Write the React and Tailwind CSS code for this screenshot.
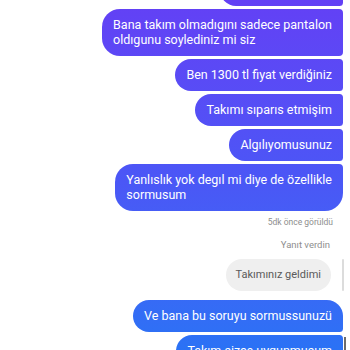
const font = { fontFamily: "Roboto, 'Liberation Sans', sans-serif" };

const sent = [
  { lines: ["Tamam ama bana"], pos: "first" },
  { lines: ["Bana takım olmadıgını sadece pantalon", "oldıgunu soylediniz mi siz"], pos: "mid" },
  { lines: ["Ben 1300 tl fiyat verdiğiniz"], pos: "mid" },
  { lines: ["Takımı sıparıs etmişim"], pos: "mid" },
  { lines: ["Algılıyomusunuz"], pos: "mid" },
  { lines: ["Yanlıslık yok degıl mi diye de özellikle", "sormusum"], pos: "last" },
];

const corner = {
  first: "rounded-l-[18px] rounded-tr-[18px] rounded-br-[4px]",
  mid: "rounded-l-[18px] rounded-r-[4px]",
  last: "rounded-l-[18px] rounded-tr-[4px] rounded-br-[18px]",
};

const Bubble = ({ lines, pos }) => (
  <div
    className={`bg-linear-to-b from-[#6340f5] via-[#4b56f6] to-[#2a72f5] bg-fixed text-white text-[12.5px] leading-[14px] px-[11px] py-[9px] whitespace-nowrap ${corner[pos]}`}
  >
    {lines.map((l, i) => (
      <div key={i} className={i > 0 ? "mt-[1px]" : ""}>
        {l}
      </div>
    ))}
  </div>
);

export default function App() {
  return (
    <div className="w-[350px] h-[350px] overflow-hidden bg-white" style={font}>
      <div className="flex flex-col items-end pr-[7px] gap-[3px] -mt-[26px]">
        {sent.map((m, i) => (
          <Bubble key={i} {...m} />
        ))}

        <div className="text-[8.5px] text-[#8e8e8e] pr-[10px] mt-[3px] leading-[10px]">
          5dk önce görüldü
        </div>
        <div className="text-[9.5px] text-[#8e8e8e] pr-[13px] mt-[9px] leading-[12px]">
          Yanıt verdin
        </div>
        <div className="flex items-stretch gap-[11px] mt-[5px] -mr-[1px]">
          <div className="bg-[#efefef] text-[#5a5a5a] text-[11px] leading-[14px] px-[10px] py-[9px] rounded-full whitespace-nowrap">
            Takımınız geldimi
          </div>
          <div className="w-[2px] bg-[#dcdcdc] rounded-full" />
        </div>

        <div className="mt-[6px]">
          <Bubble lines={["Ve bana bu soruyu sormussunuzü"]} pos="first" />
        </div>
        <div className="flex items-start gap-[1px] -mr-[3px]">
          <Bubble lines={["Takım sizce uygunmuşum"]} pos="mid" />
          <div className="w-[2px] h-[20px] mt-[2px] bg-[#6b6b6b]" />
        </div>
      </div>
    </div>
  );
}
